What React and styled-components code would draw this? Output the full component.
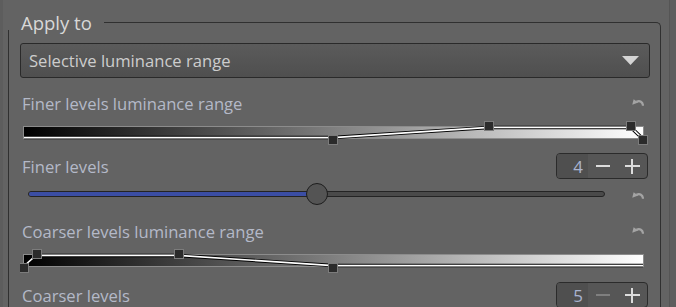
import React from 'react';
import styled, { createGlobalStyle } from 'styled-components';

const GlobalStyle = createGlobalStyle`
  html, body {
    margin: 0;
    padding: 0;
    background: #636363;
    overflow: hidden;
  }
  body {
    font-family: "Open Sans", "Noto Sans", sans-serif;
  }
`;

const Page = styled.div`
  display: flex;
  width: 676px;
  height: 307px;
  overflow: hidden;
  background: #636363;
`;

const LeftStrip = styled.div`
  width: 3px;
  background: #5d5d5d;
  margin-right: 5px;
`;

const RightStrip = styled.div`
  width: 6px;
  margin-left: 8px;
  border-left: 1px solid #555;
  background: #5e5e5e;
`;

const Frame = styled.div`
  flex: 1;
  display: flex;
  flex-direction: column;
`;

const Header = styled.div`
  display: flex;
  height: 30px;
`;

const Title = styled.div`
  margin: 12px 0 0 13px;
  line-height: 22px;
  height: 22px;
  font-size: 18.5px;
  color: #d8d8d8;
  white-space: nowrap;
`;

const TopLine = styled.div`
  flex: 1;
  margin: 22px 0 0 12px;
  height: 8px;
  border-top: 1px solid #303030;
  border-right: 1px solid #303030;
  border-top-right-radius: 5px;
  box-sizing: border-box;
`;

const Body = styled.div`
  flex: 1;
  display: flex;
  flex-direction: column;
  border-left: 1px solid #303030;
  border-right: 1px solid #303030;
  padding: 0 10px 0 11px;
`;

const Dropdown = styled.div`
  margin-top: 13px;
  height: 35px;
  box-sizing: border-box;
  border: 1px solid #2a2a2a;
  border-radius: 3px;
  background: linear-gradient(#5b5b5b, #4f4f4f);
  display: flex;
  align-items: center;
  justify-content: space-between;
  padding: 0 10px 0 8px;
  font-size: 16.6px;
  color: #cdcdcd;
`;

const LabelRow = styled.div`
  display: flex;
  align-items: center;
  justify-content: space-between;
  height: 26px;
  margin-top: ${(p) => p.$top}px;
  padding-left: 2px;
`;

const Label = styled.span`
  font-size: 16.6px;
  color: #b4b9c8;
  white-space: nowrap;
`;

const ResetIcon = styled.svg`
  width: 12px;
  height: 8px;
  margin-left: ${(p) => p.$gap || 0}px;
  margin-right: 6px;
  margin-bottom: ${(p) => p.$lift || 0}px;
  flex-shrink: 0;
`;

const Curve = styled.svg`
  display: block;
  width: 630px;
  height: 30px;
`;

const Spin = styled.div`
  display: flex;
  height: 26px;
  width: 92px;
  box-sizing: border-box;
  margin-right: 2px;
  border: 1px solid #2b2b2b;
  border-radius: 4px;
  overflow: hidden;
  background: #565656;
`;

const SpinValue = styled.div`
  width: 31px;
  background: #4f4f4f;
  display: flex;
  align-items: center;
  justify-content: flex-end;
  padding-right: 5px;
  box-sizing: border-box;
  font-size: 17px;
  color: #a9b3cf;
`;

const SpinButton = styled.div`
  flex: 1;
  display: flex;
  align-items: center;
  justify-content: center;
`;

const Minus = styled.div`
  width: 14px;
  height: 2px;
  background: ${(p) => (p.$disabled ? '#7f7f7f' : '#dcdcdc')};
`;

const Plus = styled.div`
  width: 15px;
  height: 15px;
  position: relative;
  &::before, &::after {
    content: '';
    position: absolute;
    background: #dcdcdc;
  }
  &::before {
    left: 0;
    right: 0;
    top: 6.5px;
    height: 2px;
  }
  &::after {
    top: 0;
    bottom: 0;
    left: 6.5px;
    width: 2px;
  }
`;

const SliderRow = styled.div`
  display: flex;
  align-items: center;
  height: 22px;
  margin-top: 4px;
`;

const Track = styled.div`
  flex: 1;
  margin-left: 8px;
  height: 6px;
  box-sizing: border-box;
  border: 1px solid #242424;
  border-radius: 3px;
  background: #4a4a4a;
  position: relative;
`;

const TrackFill = styled.div`
  height: 100%;
  background: #3b4ea4;
  border-radius: 3px 0 0 3px;
`;

const Thumb = styled.div`
  position: absolute;
  top: 50%;
  width: 22px;
  height: 22px;
  box-sizing: border-box;
  margin: -11px 0 0 -11px;
  border-radius: 50%;
  border: 1.5px solid #1d1d1d;
  background: #545454;
`;

function Reset({ lift, gap }) {
  return (
    <ResetIcon $lift={lift} $gap={gap} viewBox="0 0 12 8">
      <path d="M11 7.8 C10.8 3.8 7.8 2.2 4.4 3.8" stroke="#a4a4a4" strokeWidth="2.2" fill="none" />
      <polygon points="0.3,6.8 1.6,1.2 6.2,4.6" fill="#a4a4a4" />
    </ResetIcon>
  );
}

function LumaCurve({ id, originY, path, points }) {
  return (
    <Curve viewBox="0 0 630 30">
      <defs>
        <linearGradient id={id} x1="0" x2="1" y1="0" y2="0">
          <stop offset="0" stopColor="#000" />
          <stop offset="1" stopColor="#fff" />
        </linearGradient>
      </defs>
      <g transform={`translate(-20,-${originY})`}>
        <rect x="23.5" y={originY + 10.5} width="620" height="12" fill={`url(#${id})`} stroke="#8c8c8c" />
        <path d={path} stroke="#000" strokeWidth="3.5" fill="none" strokeLinejoin="round" />
        <path d={path} stroke="#fff" strokeWidth="1.6" fill="none" strokeLinejoin="round" />
        {points.map(([x, y]) => (
          <rect key={x} x={x - 4.5} y={y - 4.5} width="9" height="9" fill="#2b2b2b" stroke="#7c7c7c" />
        ))}
      </g>
    </Curve>
  );
}

function SpinBox({ value, minDisabled }) {
  return (
    <Spin>
      <SpinValue>{value}</SpinValue>
      <SpinButton>
        <Minus $disabled={minDisabled} />
      </SpinButton>
      <SpinButton>
        <Plus />
      </SpinButton>
    </Spin>
  );
}

export default function App() {
  const finer = 0.5;
  return (
    <Page>
      <GlobalStyle />
      <LeftStrip />
      <Frame>
        <Header>
          <Title>Apply to</Title>
          <TopLine />
        </Header>
        <Body>
          <Dropdown>
            <span>Selective luminance range</span>
            <svg width="17" height="9" viewBox="0 0 17 9">
              <polygon points="0,0 17,0 8.5,9" fill="#d4d4d4" />
            </svg>
          </Dropdown>

          <LabelRow $top={12}>
            <Label>Finer levels luminance range</Label>
            <Reset lift={3} />
          </LabelRow>
          <LumaCurve
            id="g1"
            originY={116}
            path="M24,137.6 L333,137.6 L489,127.4 L631,127.4 L643,139"
            points={[[333, 140], [489, 126], [631, 126], [643, 140]]}
          />

          <LabelRow $top={7}>
            <Label>Finer levels</Label>
            <SpinBox value="4" />
          </LabelRow>
          <SliderRow>
            <Track>
              <TrackFill style={{ width: `${finer * 100}%` }} />
              <Thumb style={{ left: `${finer * 100}%` }} />
            </Track>
            <Reset gap={27} lift={-1} />
          </SliderRow>

          <LabelRow $top={13}>
            <Label>Coarser levels luminance range</Label>
            <Reset lift={3} />
          </LabelRow>
          <LumaCurve
            id="g2"
            originY={244}
            path="M24,266 L36,255.4 L178,255.4 L333,265.6 L643,265.6"
            points={[[24, 268], [37, 254], [179, 254], [333, 268]]}
          />

          <LabelRow $top={8}>
            <Label>Coarser levels</Label>
            <SpinBox value="5" minDisabled />
          </LabelRow>
        </Body>
      </Frame>
      <RightStrip />
    </Page>
  );
}
